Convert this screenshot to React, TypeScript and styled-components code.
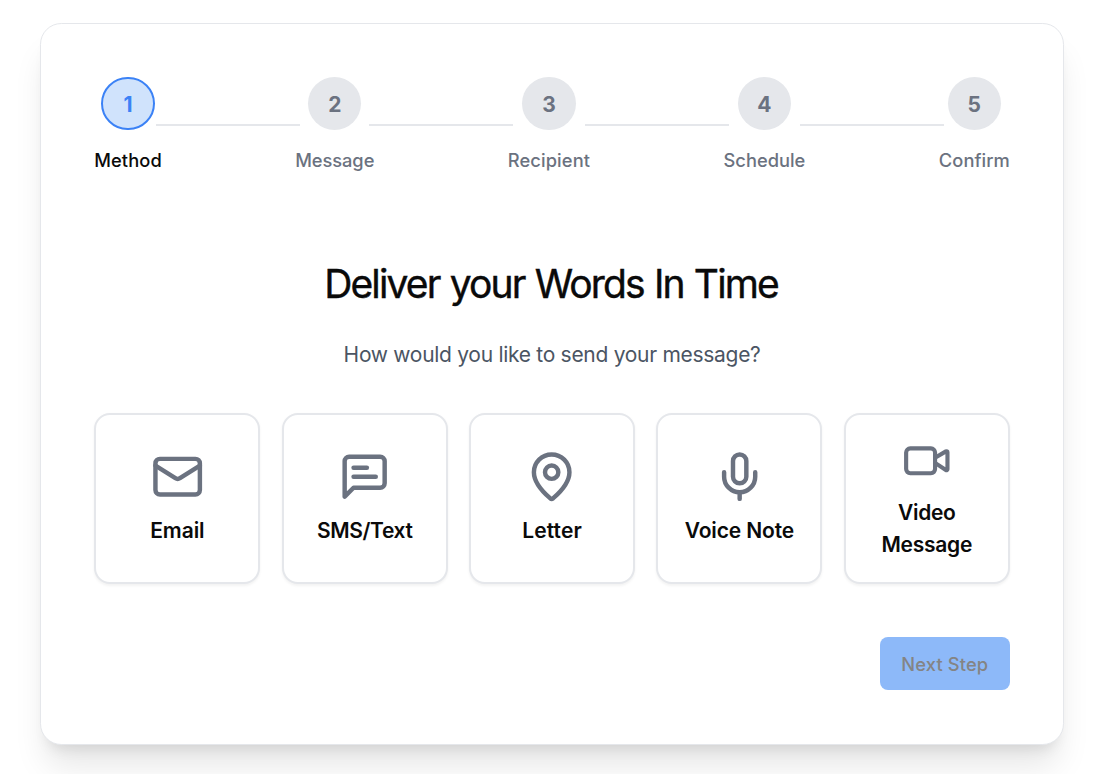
import { ReactNode, useState } from 'react';
import styled, { createGlobalStyle } from 'styled-components';

const GlobalStyle = createGlobalStyle`
  *,
  *::before,
  *::after {
    box-sizing: border-box;
  }

  body {
    margin: 0;
    background: #fff;
    color: #0a0a0a;
    font-family: Inter, 'Liberation Sans', sans-serif;
    overflow: hidden;
  }
`;

const Page = styled.div`
  display: flex;
  justify-content: center;
  height: 774px;
  padding: 23px 38px 29px 40px;
`;

const Card = styled.main`
  width: 1024px;
  height: 722px;
  padding: 53px 53.2px 54px 53.33px;
  border: 1px solid #e5e7eb;
  border-radius: 21.33px;
  background: #fff;
  box-shadow:
    0 26.67px 33.33px -6.67px rgba(0, 0, 0, 0.1),
    0 10.67px 13.33px -8px rgba(0, 0, 0, 0.1);
`;

const Stepper = styled.div`
  display: flex;
  align-items: center;
`;

const Step = styled.div<{ $width: number }>`
  display: flex;
  flex: none;
  flex-direction: column;
  align-items: center;
  width: ${({ $width }) => $width}px;
`;

const StepNumber = styled.div<{ $active: boolean }>`
  display: flex;
  align-items: center;
  justify-content: center;
  width: 53.33px;
  height: 53.33px;
  padding-top: 1.5px;
  border: ${({ $active }) => ($active ? '2px solid #3b82f6' : 'none')};
  border-radius: 50%;
  background: ${({ $active }) => ($active ? '#d0e3fc' : '#e5e7eb')};
  color: ${({ $active }) => ($active ? '#3b82f6' : '#6b7280')};
  font-size: 21px;
  font-weight: 700;
`;

const StepLabel = styled.div<{ $active: boolean; $spacing: number }>`
  margin-top: 19px;
  padding-bottom: 1px;
  color: ${({ $active }) => ($active ? '#0a0a0a' : '#6b7280')};
  font-size: 18.3px;
  font-weight: 500;
  line-height: 22.67px;
  letter-spacing: ${({ $spacing }) => $spacing}px;
  white-space: nowrap;
`;

const StepLine = styled.div`
  flex: 1;
  height: 2px;
  margin: 0 -5.33px;
  background: #e5e7eb;
`;

const Title = styled.h1`
  margin: 84px 0 0;
  font-size: 39px;
  font-weight: 400;
  line-height: 53px;
  letter-spacing: -1.85px;
  word-spacing: 1px;
  text-align: center;
  text-indent: -2px;
  -webkit-text-stroke: 0.4px currentColor;
`;

const Subtitle = styled.p`
  margin: 29px 0 0;
  color: #4b5563;
  font-size: 21px;
  line-height: 32px;
  letter-spacing: -0.29px;
  text-align: center;
`;

const Methods = styled.div`
  display: grid;
  grid-template-columns: repeat(5, 1fr);
  gap: 21.33px;
  margin-top: 42px;
`;

const MethodButton = styled.button<{ $selected: boolean }>`
  display: flex;
  flex-direction: column;
  align-items: center;
  justify-content: center;
  height: 171px;
  padding: 0 16px;
  border: 2px solid ${({ $selected }) => ($selected ? '#3b82f6' : '#e5e7eb')};
  border-radius: 16px;
  background: #fff;
  box-shadow: 0 1.33px 2.67px rgba(0, 0, 0, 0.05);
  color: #0a0a0a;
  font-family: inherit;
  cursor: pointer;
`;

const MethodIcon = styled.svg<{ $size: number }>`
  flex: none;
  width: ${({ $size }) => $size}px;
  height: ${({ $size }) => $size}px;
  fill: none;
  stroke: #6b7280;
  stroke-width: 2;
  stroke-linecap: round;
  stroke-linejoin: round;
`;

const MethodName = styled.span<{ $spacing: number }>`
  margin-top: 12px;
  font-size: 21px;
  font-weight: 600;
  line-height: 32px;
  letter-spacing: ${({ $spacing }) => $spacing}px;
`;

const Footer = styled.div`
  display: flex;
  justify-content: flex-end;
  margin-top: 53px;
`;

const NextButton = styled.button`
  width: 130px;
  height: 53px;
  padding: 0;
  border: 0;
  border-radius: 8px;
  background: #8db9f9;
  color: #848484;
  font-family: inherit;
  font-size: 18.3px;
  font-weight: 500;
  letter-spacing: 0.15px;
`;

interface StepItem {
  label: string;
  width: number;
  spacing: number;
}

interface Method {
  name: string;
  spacing: number;
  size?: number;
  icon: ReactNode;
}

const steps: StepItem[] = [
  { label: 'Method', width: 67.4, spacing: 0.1 },
  { label: 'Message', width: 79.3, spacing: -0.05 },
  { label: 'Recipient', width: 82.3, spacing: 0.12 },
  { label: 'Schedule', width: 82, spacing: 0 },
  { label: 'Confirm', width: 71, spacing: 0.05 }
];

const methods: Method[] = [
  {
    name: 'Email',
    spacing: -0.1,
    icon: (
      <>
        <rect width="20" height="16" x="2" y="4" rx="2" />
        <path d="m22 7-8.97 5.7a1.94 1.94 0 0 1-2.06 0L2 7" />
      </>
    )
  },
  {
    name: 'SMS/Text',
    spacing: -0.38,
    icon: (
      <>
        <path d="M21 15a2 2 0 0 1-2 2H7l-4 4V5a2 2 0 0 1 2-2h14a2 2 0 0 1 2 2z" />
        <path d="M13 8H7" />
        <path d="M17 12H7" />
      </>
    )
  },
  {
    name: 'Letter',
    spacing: 0.1,
    icon: (
      <>
        <path d="M20 10c0 4.993-5.539 10.193-7.399 11.799a1 1 0 0 1-1.202 0C9.539 20.193 4 14.993 4 10a8 8 0 0 1 16 0" />
        <circle cx="12" cy="10" r="3" />
      </>
    )
  },
  {
    name: 'Voice Note',
    spacing: -0.12,
    icon: (
      <>
        <path d="M12 2a3 3 0 0 0-3 3v7a3 3 0 0 0 6 0V5a3 3 0 0 0-3-3Z" />
        <path d="M19 10v2a7 7 0 0 1-14 0v-2" />
        <path d="M12 19v3" />
      </>
    )
  },
  {
    name: 'Video Message',
    spacing: -0.28,
    size: 49.6,
    icon: (
      <>
        <path d="m16 13 5.223 3.482a.5.5 0 0 0 .777-.416V7.87a.5.5 0 0 0-.752-.432L16 10.5" />
        <rect x="2" y="6" width="14" height="12" rx="2" />
      </>
    )
  }
];

const App = () => {
  const [selected, setSelected] = useState<string | undefined>(undefined);

  return (
    <>
      <GlobalStyle />
      <Page>
        <Card>
          <Stepper>
            {steps.flatMap(({ label, width, spacing }, index) => [
              index > 0 && <StepLine key={`line-${label}`} />,
              <Step key={label} $width={width}>
                <StepNumber $active={index === 0}>{index + 1}</StepNumber>
                <StepLabel $active={index === 0} $spacing={spacing}>
                  {label}
                </StepLabel>
              </Step>
            ])}
          </Stepper>
          <Title>Deliver your Words In Time</Title>
          <Subtitle>How would you like to send your message?</Subtitle>
          <Methods>
            {methods.map(({ name, spacing, size = 53.33, icon }) => (
              <MethodButton
                key={name}
                type="button"
                $selected={selected === name}
                onClick={() => setSelected(name)}
              >
                <MethodIcon viewBox="0 0 24 24" $size={size}>
                  {icon}
                </MethodIcon>
                <MethodName $spacing={spacing}>{name}</MethodName>
              </MethodButton>
            ))}
          </Methods>
          <Footer>
            <NextButton type="button" disabled={!selected}>
              Next Step
            </NextButton>
          </Footer>
        </Card>
      </Page>
    </>
  );
};

export default App;
